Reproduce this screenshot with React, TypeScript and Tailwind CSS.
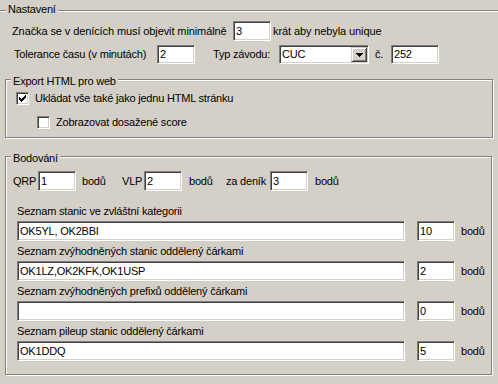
import React from "react";

const sunken =
  "bg-white border border-t-[#808080] border-l-[#808080] border-r-white border-b-white shadow-[inset_1px_1px_0_#404040,inset_-1px_-1px_0_#d4d0c8]";
const etched = "border border-[#808080] shadow-[inset_1px_1px_0_#fff,1px_1px_0_#fff]";

function Edit({ w, h = "h-[20px]", value }: { w: string; h?: string; value: string }) {
  return (
    <div className={`${sunken} ${w} ${h} shrink-0 flex items-center pl-[2px] pr-[2px] overflow-hidden whitespace-nowrap`}>
      {value}
    </div>
  );
}

function Check({ checked }: { checked: boolean }) {
  return (
    <div className={`${sunken} w-[13px] h-[13px] shrink-0 relative`}>
      {checked && (
        <svg width="7" height="7" viewBox="0 0 7 7" className="absolute left-[2px] top-[2px]" shapeRendering="crispEdges">
          <rect x="6" y="0" width="1" height="1" fill="#000" />
          <rect x="5" y="1" width="2" height="1" fill="#000" />
          <rect x="0" y="2" width="1" height="1" fill="#000" />
          <rect x="4" y="2" width="3" height="1" fill="#000" />
          <rect x="0" y="3" width="2" height="1" fill="#000" />
          <rect x="3" y="3" width="3" height="1" fill="#000" />
          <rect x="0" y="4" width="5" height="1" fill="#000" />
          <rect x="1" y="5" width="3" height="1" fill="#000" />
          <rect x="2" y="6" width="1" height="1" fill="#000" />
        </svg>
      )}
    </div>
  );
}

function Combo() {
  return (
    <div className={`${sunken} w-[90px] h-[19px] shrink-0 flex items-center justify-between pl-[2px] pr-[1px]`}>
      <span>CUC</span>
      <div className="w-[16px] h-[15px] bg-[#d4d0c8] border border-t-[#d4d0c8] border-l-[#d4d0c8] border-r-[#404040] border-b-[#404040] shadow-[inset_1px_1px_0_#fff,inset_-1px_-1px_0_#808080] flex items-center justify-center">
        <svg width="7" height="4" viewBox="0 0 7 4" shapeRendering="crispEdges">
          <rect x="0" y="0" width="7" height="1" fill="#000" />
          <rect x="1" y="1" width="5" height="1" fill="#000" />
          <rect x="2" y="2" width="3" height="1" fill="#000" />
          <rect x="3" y="3" width="1" height="1" fill="#000" />
        </svg>
      </div>
    </div>
  );
}

function ListItem({ label, value, pts, first }: { label: string; value: string; pts: string; first?: boolean }) {
  return (
    <div className={first ? "" : "mt-[4px]"}>
      <div className="h-[13px] whitespace-nowrap">{label}</div>
      <div className="mt-[3px] flex items-center">
        <Edit w="w-[388px]" value={value} />
        <div className="ml-[12px]">
          <Edit w="w-[38px]" value={pts} />
        </div>
        <span className="ml-[6px]">bodů</span>
      </div>
    </div>
  );
}

export default function App() {
  return (
    <div className="w-[498px] h-[384px] overflow-hidden bg-[#d4d0c8] text-black text-[11px] leading-[13px] tracking-[-0.2px] font-['Liberation_Sans',Arial,sans-serif]">
      <div className="relative mt-[10px] w-full h-[380px] border-t border-[#808080] shadow-[inset_0_1px_0_#fff]">
        <span className="absolute left-[6px] -top-[8px] px-[2px] bg-[#d4d0c8]">Nastavení</span>

        <div className="pt-[10px]">
          <div className="flex items-center h-[20px] pl-[12px] whitespace-nowrap tracking-[-0.1px]">
            <span className="w-[221px] shrink-0">Značka se v denících musí objevit minimálně</span>
            <Edit w="w-[38px]" value="3" />
            <span className="ml-[2px]">krát aby nebyla unique</span>
          </div>

          <div className="mt-[4px] flex items-center h-[19px] pl-[14px] whitespace-nowrap">
            <span className="w-[143px] shrink-0">Tolerance času (v minutách)</span>
            <Edit w="w-[38px]" h="h-[19px]" value="2" />
            <span className="ml-[18px] w-[66px] shrink-0">Typ závodu:</span>
            <Combo />
            <span className="ml-[6px] w-[16px] shrink-0">č.</span>
            <Edit w="w-[48px]" h="h-[19px]" value="252" />
          </div>
        </div>

        <div className={`relative mt-[15px] ml-[5px] w-[488px] h-[59px] ${etched}`}>
          <span className="absolute left-[5px] -top-[5px] px-[2px] bg-[#d4d0c8] leading-[13px]">Export HTML pro web</span>
          <div className="pt-[12px] pl-[10px]">
            <div className="flex items-center h-[13px] whitespace-nowrap">
              <Check checked />
              <span className="ml-[6px]">Ukládat vše také jako jednu HTML stránku</span>
            </div>
            <div className="mt-[11px] ml-[21px] flex items-center h-[13px] whitespace-nowrap">
              <Check checked={false} />
              <span className="ml-[6px]">Zobrazovat dosažené score</span>
            </div>
          </div>
        </div>

        <div className={`relative mt-[18px] ml-[5px] w-[487px] h-[219px] ${etched}`}>
          <span className="absolute left-[5px] -top-[5px] px-[2px] bg-[#d4d0c8]">Bodování</span>
          <div className="pt-[14px]">
            <div className="flex items-center h-[20px] pl-[7px] whitespace-nowrap">
              <span className="w-[25px] shrink-0">QRP</span>
              <Edit w="w-[38px]" value="1" />
              <span className="ml-[6px] w-[40px] shrink-0">bodů</span>
              <span className="w-[22px] shrink-0">VLP</span>
              <Edit w="w-[38px]" value="2" />
              <span className="ml-[7px] w-[37px] shrink-0">bodů</span>
              <span className="w-[44px] shrink-0">za deník</span>
              <Edit w="w-[38px]" value="3" />
              <span className="ml-[7px]">bodů</span>
            </div>

            <div className="mt-[14px] pl-[11px]">
              <ListItem first label="Seznam stanic ve zvláštní kategorii" value="OK5YL, OK2BBI" pts="10" />
              <ListItem label="Seznam zvýhodněných stanic oddělený čárkami" value="OK1LZ,OK2KFK,OK1USP" pts="2" />
              <ListItem label="Seznam zvýhodněných prefixů oddělený čárkami" value="" pts="0" />
              <ListItem label="Seznam pileup stanic oddělený čárkami" value="OK1DDQ" pts="5" />
            </div>
          </div>
        </div>
      </div>
    </div>
  );
}
